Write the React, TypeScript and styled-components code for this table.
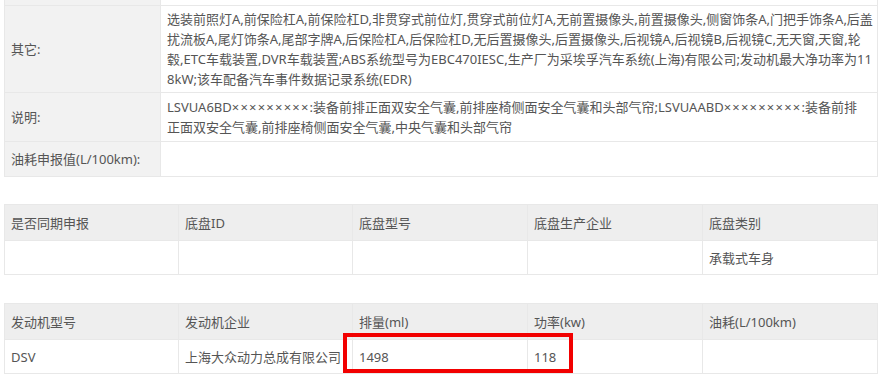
import React from 'react';
import styled, { createGlobalStyle } from 'styled-components';

const GlobalStyle = createGlobalStyle`
  body {
    margin: 0;
    background: #fff;
    font-family: "Noto Sans", "Noto Sans CJK SC", sans-serif;
    font-size: 13px;
    color: #555;
  }
`;

const Page = styled.div`
  width: 880px;
  height: 378px;
  overflow: hidden;
  padding-left: 4px;
  box-sizing: border-box;
`;

const Table = styled.table<{ $gap?: number; $width: number }>`
  width: ${({ $width }) => $width}px;
  border-collapse: collapse;
  table-layout: fixed;
  margin-top: ${({ $gap }) => $gap ?? 0}px;

  td,
  th {
    border: 1px solid #e8e8e8;
    padding: 0 6px;
    font-weight: 400;
    text-align: left;
    vertical-align: middle;
    line-height: 20px;
    white-space: nowrap;
  }
`;

const Row = styled.tr<{ $h: number }>`
  height: ${({ $h }) => $h}px;
`;

const Label = styled.td`
  background: #f2f2f2;
`;

const Value = styled.td`
  background: #fff;
`;

const Head = styled.th`
  background: #eeeeee;
`;

const Cell = styled.td`
  background: #fff;
`;

const Lines = styled.div`
  padding: 2px 0;
`;

const Mask = styled.span`
  letter-spacing: 1.2px;
`;

const Wrap = styled.div<{ $gap: number }>`
  position: relative;
  padding-top: ${({ $gap }) => $gap}px;
`;

const Highlight = styled.div`
  position: absolute;
  left: 339px;
  bottom: 1px;
  width: 230px;
  height: 40px;
  border: 4px solid #f20000;
  box-sizing: border-box;
  pointer-events: none;
`;

const otherLines = [
  '选装前照灯A,前保险杠A,前保险杠D,非贯穿式前位灯,贯穿式前位灯A,无前置摄像头,前置摄像头,侧窗饰条A,门把手饰条A,后盖',
  '扰流板A,尾灯饰条A,尾部字牌A,后保险杠A,后保险杠D,无后置摄像头,后置摄像头,后视镜A,后视镜B,后视镜C,无天窗,天窗,轮',
  '毂,ETC车载装置,DVR车载装置;ABS系统型号为EBC470IESC,生产厂为采埃孚汽车系统(上海)有限公司;发动机最大净功率为11',
  '8kW;该车配备汽车事件数据记录系统(EDR)',
];

const noteLines = [
  'LSVUA6BD×××××××××:装备前排正面双安全气囊,前排座椅侧面安全气囊和头部气帘;LSVUAABD×××××××××:装备前排',
  '正面双安全气囊,前排座椅侧面安全气囊,中央气囊和头部气帘',
];

const chassisHead = ['是否同期申报', '底盘ID', '底盘型号', '底盘生产企业', '底盘类别'];
const chassisRow = ['', '', '', '', '承载式车身'];
const engineHead = ['发动机型号', '发动机企业', '排量(ml)', '功率(kw)', '油耗(L/100km)'];
const engineRow = ['DSV', '上海大众动力总成有限公司', '1498', '118', ''];

// the VIN mask crosses are drawn wider apart in the original
const renderLine = (line: string) =>
  line.split(/(×+)/).map((part, i) =>
    part.startsWith('×') ? <Mask key={i}>{part}</Mask> : part
  );

const renderLines = (lines: string[]) => (
  <Lines>
    {lines.map((l, i) => (
      <div key={i}>{renderLine(l)}</div>
    ))}
  </Lines>
);

const GridTable: React.FC<{ head: string[]; row: string[] }> = ({ head, row }) => (
  <Table $width={873}>
    <colgroup>
      <col style={{ width: 174 }} />
      <col style={{ width: 174 }} />
      <col style={{ width: 175 }} />
      <col style={{ width: 175 }} />
      <col style={{ width: 175 }} />
    </colgroup>
    <tbody>
      <Row $h={36}>
        {head.map((h) => (
          <Head key={h}>{h}</Head>
        ))}
      </Row>
      <Row $h={34}>
        {row.map((v, i) => (
          <Cell key={i}>{v}</Cell>
        ))}
      </Row>
    </tbody>
  </Table>
);

export default function App() {
  return (
    <Page>
      <GlobalStyle />
      <Table $width={874} $gap={-1}>
        <colgroup>
          <col style={{ width: 156 }} />
          <col />
        </colgroup>
        <tbody>
          <Row $h={6}>
            <Label />
            <Value />
          </Row>
          <Row $h={87}>
            <Label>其它:</Label>
            <Value>{renderLines(otherLines)}</Value>
          </Row>
          <Row $h={49}>
            <Label>说明:</Label>
            <Value>{renderLines(noteLines)}</Value>
          </Row>
          <Row $h={35}>
            <Label>油耗申报值(L/100km):</Label>
            <Value />
          </Row>
        </tbody>
      </Table>
      <Wrap $gap={27}>
        <GridTable head={chassisHead} row={chassisRow} />
      </Wrap>
      <Wrap $gap={28}>
        <GridTable head={engineHead} row={engineRow} />
        <Highlight />
      </Wrap>
    </Page>
  );
}
